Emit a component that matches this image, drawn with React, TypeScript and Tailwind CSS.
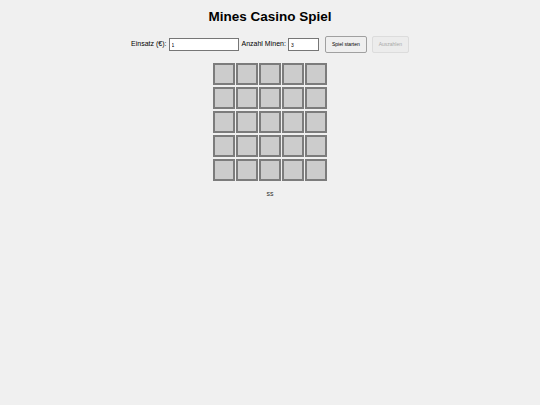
export default function App() {
  const cells = Array.from({ length: 25 }, (_, i) => i);

  return (
    <div className="min-h-[405px] w-full bg-[#f0f0f0] font-['Liberation_Sans',Arial,sans-serif] text-black">
      <div className="flex flex-col items-center pt-[8px]">
        <h1 className="text-[13.5px] font-bold leading-[18px]">Mines Casino Spiel</h1>

        {/* Steuerung */}
        <div className="mt-[10px] flex items-center text-[7px]">
          <label className="mr-[2px]">Einsatz (€):</label>
          <input
            type="number"
            defaultValue={1}
            className="h-[13px] w-[70px] border border-[#767676] bg-white px-[2px] text-[5px] outline-none"
          />
          <label className="ml-[3px] mr-[2px]">Anzahl Minen:</label>
          <input
            type="number"
            defaultValue={3}
            className="h-[13px] w-[31px] border border-[#767676] bg-white px-[2px] text-[5px] outline-none"
          />
          <button className="ml-[6px] h-[17px] w-[42px] rounded-[2px] border border-[#a0a0a0] bg-[#efefef] text-[5px]">
            Spiel starten
          </button>
          <button
            disabled
            className="ml-[5px] h-[17px] w-[37px] rounded-[2px] border border-[#dcdcdc] bg-[#ececec] text-[5px] text-[#a8a8a8]"
          >
            Auszahlen
          </button>
        </div>

        {/* Spielfeld */}
        <div className="mt-[10px] grid grid-cols-5 gap-x-[1px] gap-y-[2px]">
          {cells.map((c) => (
            <div key={c} className="h-[22px] w-[22px] border-2 border-[#7c7c7c] bg-[#cccccc]" />
          ))}
        </div>

        <div className="mt-[9px] text-[7px] leading-[8px] text-[#333]">ss</div>
      </div>
    </div>
  );
}
